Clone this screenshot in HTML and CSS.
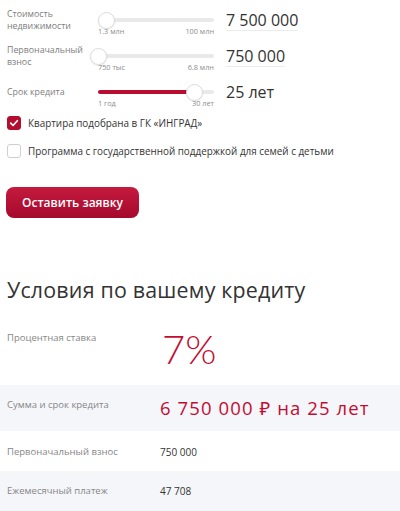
FILE: index.html
```html
<!DOCTYPE html>
<html lang="ru">
<head>
<meta charset="utf-8">
<link rel="stylesheet" href="styles.css">
</head>
<body>
<div class="page">
  <div class="calc">
    <div class="calc-row">
      <div class="calc-label">Стоимость<br>недвижимости</div>
      <div class="slider">
        <div class="track"><div class="thumb" style="left:6.9%"></div></div>
        <div class="scale"><span>1.3 млн</span><span>100 млн</span></div>
      </div>
      <div class="calc-value"><span class="input">7 500 000</span></div>
    </div>
    <div class="calc-row">
      <div class="calc-label">Первоначальный<br>взнос</div>
      <div class="slider">
        <div class="track"><div class="thumb" style="left:0%"></div></div>
        <div class="scale"><span>750 тыс</span><span>6.8 млн</span></div>
      </div>
      <div class="calc-value"><span class="input">750 000</span></div>
    </div>
    <div class="calc-row">
      <div class="calc-label">Срок кредита</div>
      <div class="slider">
        <div class="track"><div class="fill" style="width:83.6%"></div><div class="thumb" style="left:83.6%"></div></div>
        <div class="scale"><span>1 год</span><span>30 лет</span></div>
      </div>
      <div class="calc-value"><span class="plain">25 лет</span></div>
    </div>
  </div>

  <div class="checks">
    <label class="check">
      <span class="box box-on"><svg viewBox="0 0 14 14" width="14" height="14"><path d="M3.2 7.2 L5.9 9.9 L10.9 4.4" fill="none" stroke="#fff" stroke-width="2" stroke-linecap="round" stroke-linejoin="round"/></svg></span>
      <span class="check-text">Квартира подобрана в ГК «ИНГРАД»</span>
    </label>
    <label class="check">
      <span class="box"></span>
      <span class="check-text">Программа с государственной поддержкой для семей с детьми</span>
    </label>
  </div>

  <button class="btn">Оставить заявку</button>

  <h2 class="title">Условия по вашему кредиту</h2>
</div>

<div class="terms">
  <div class="term term-rate">
    <div class="term-label">Процентная ставка</div>
    <div class="rate">7%</div>
  </div>
  <div class="term term-sum alt">
    <div class="term-label">Сумма и срок кредита</div>
    <div class="sum">6 750 000 ₽ на 25 лет</div>
  </div>
  <div class="term term-small">
    <div class="term-label">Первоначальный взнос</div>
    <div class="term-value">750 000</div>
  </div>
  <div class="term term-small alt">
    <div class="term-label">Ежемесячный платеж</div>
    <div class="term-value">47 708</div>
  </div>
</div>
</body>
</html>
```

FILE: styles.css
```css
* { box-sizing: border-box; }
html, body { margin: 0; padding: 0; background: #fff; }
body {
  font-family: "Open Sans", "Noto Sans", sans-serif;
  color: #333;
  width: 400px;
  height: 511px;
  overflow: hidden;
}
.page { padding: 4px 7px 0 7px; }

.calc { display: flex; flex-direction: column; gap: 4px; }
.calc-row {
  display: grid;
  grid-template-columns: 91px 116px 1fr;
  align-items: center;
}
.calc-label {
  font-size: 8.8px;
  line-height: 12px;
  color: #7d7d7d;
}
.slider { padding-top: 8px; }
.track {
  position: relative;
  height: 16px;
}
.track::before {
  content: "";
  position: absolute;
  left: 0; right: 0; top: 6px;
  height: 4px;
  border-radius: 2px;
  background: #e9e9ea;
}
.fill {
  position: absolute;
  left: 0; top: 6px;
  height: 4px;
  border-radius: 2px;
  background: #b80c30;
}
.thumb {
  position: absolute;
  top: -0.5px;
  width: 17px; height: 17px;
  margin-left: -8.5px;
  border-radius: 50%;
  background: #fff;
  border: 1px solid #dcdcdc;
  box-shadow: 0 1px 2px rgba(0,0,0,0.08);
}
.scale {
  display: flex;
  justify-content: space-between;
  margin-top: -2px;
  font-size: 7.3px;
  line-height: 10px;
  color: #8c8c8c;
}
.calc-value { font-size: 16px; line-height: 18px; color: #333; padding-left: 12px; }
.input {
  display: inline-block;
  border-bottom: 1px solid #ececec;
  padding-bottom: 1px;
  margin-top: 2px;
}
.plain { display: inline-block; }

.checks { margin-top: 5px; display: flex; flex-direction: column; gap: 8px; }
.check { display: flex; align-items: center; gap: 7px; height: 20px; }
.box {
  flex: none;
  width: 14px; height: 14px;
  border: 1px solid #cfcfcf;
  border-radius: 3px;
  background: #fff;
  display: flex; align-items: center; justify-content: center;
}
.box-on { background: #b30d30; border-color: #b30d30; }
.box-on svg { display: block; }
.check-text { font-size: 9.9px; color: #333; white-space: nowrap; }

.btn {
  display: block;
  margin: 26px 0 0 -1px;
  width: 133px; height: 31px;
  border: 0;
  border-radius: 8px;
  background: linear-gradient(#c41a3e, #a50a2c);
  color: #fff;
  font-family: inherit;
  font-size: 12px;
  font-weight: 600;
  padding: 0;
}

.title {
  margin: 59px 0 15px 0;
  font-size: 21.4px;
  line-height: 26px;
  font-weight: 400;
  color: #333;
  letter-spacing: 0.2px;
}

.terms { display: flex; flex-direction: column; }
.term {
  display: grid;
  grid-template-columns: 153px 1fr;
  padding: 14px 7px 0 7px;
  align-items: start;
}
.alt { background: #f5f6fa; }
.term-label { font-size: 9.5px; line-height: 12px; color: #868686; }
.term-rate { height: 67px; }
.rate {
  margin-top: -2px;
  margin-left: 2px;
  font-family: "Lato", "Open Sans", sans-serif;
  font-size: 40px;
  line-height: 39px;
  font-weight: 300;
  color: #c30c31;
}
.term-sum { height: 46px; }
.sum {
  margin-top: -3px;
  font-size: 18.5px;
  line-height: 24px;
  letter-spacing: 1.1px;
  color: #c30c31;
}
.term-small { height: 40px; padding-top: 15px; }
.term-small.alt { padding-top: 14px; height: 40px; }
.term-value { font-size: 10px; line-height: 12px; color: #333; font-weight: 500; }
```
